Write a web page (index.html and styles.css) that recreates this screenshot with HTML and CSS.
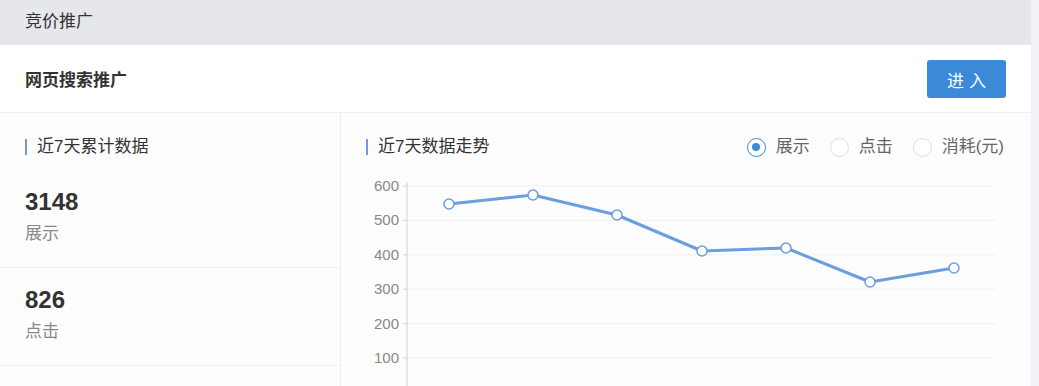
FILE: index.html
```html
<!DOCTYPE html>
<html lang="zh-CN">
<head>
    <meta charset="UTF-8">
    <meta name="viewport" content="width=device-width, initial-scale=1.0">
    <title>竞价推广</title>
    <link rel="stylesheet" href="styles.css">
</head>
<body>
    <div class="page">
        <div class="main">
            <div class="top-bar">竞价推广</div>

            <div class="head-row">
                <span class="head-title">网页搜索推广</span>
                <button class="enter-btn">进入</button>
            </div>

            <div class="content">
                <!-- 左侧：累计数据 -->
                <div class="stats">
                    <div class="section-title">近7天累计数据</div>
                    <div class="stat">
                        <div class="stat-num">3148</div>
                        <div class="stat-label">展示</div>
                    </div>
                    <div class="stat">
                        <div class="stat-num">826</div>
                        <div class="stat-label">点击</div>
                    </div>
                </div>

                <!-- 右侧：趋势图 -->
                <div class="trend">
                    <div class="trend-head">
                        <div class="section-title">近7天数据走势</div>
                        <div class="radios">
                            <label class="radio checked"><span class="dot"></span>展示</label>
                            <label class="radio"><span class="dot"></span>点击</label>
                            <label class="radio"><span class="dot"></span>消耗(元)</label>
                        </div>
                    </div>
                    <svg class="chart" width="689" height="230" viewBox="0 0 689 230">
                        <g class="grid">
                            <line x1="66" y1="16" x2="655" y2="16"/>
                            <line x1="66" y1="50.4" x2="655" y2="50.4"/>
                            <line x1="66" y1="84.8" x2="655" y2="84.8"/>
                            <line x1="66" y1="119.2" x2="655" y2="119.2"/>
                            <line x1="66" y1="153.6" x2="655" y2="153.6"/>
                            <line x1="66" y1="188" x2="655" y2="188"/>
                        </g>
                        <g class="ticks">
                            <line x1="62" y1="16" x2="66" y2="16"/>
                            <line x1="62" y1="50.4" x2="66" y2="50.4"/>
                            <line x1="62" y1="84.8" x2="66" y2="84.8"/>
                            <line x1="62" y1="119.2" x2="66" y2="119.2"/>
                            <line x1="62" y1="153.6" x2="66" y2="153.6"/>
                            <line x1="62" y1="188" x2="66" y2="188"/>
                            <line x1="66" y1="12" x2="66" y2="230"/>
                        </g>
                        <g class="axis-label">
                            <text x="58" y="21">600</text>
                            <text x="58" y="55.4">500</text>
                            <text x="58" y="89.8">400</text>
                            <text x="58" y="124.2">300</text>
                            <text x="58" y="158.6">200</text>
                            <text x="58" y="193">100</text>
                        </g>
                        <polyline class="line" points="108,34 192,25 276,45 361,81 445,78 529,112 613,98"/>
                        <g class="points">
                            <circle cx="108" cy="34" r="5"/>
                            <circle cx="192" cy="25" r="5"/>
                            <circle cx="276" cy="45" r="5"/>
                            <circle cx="361" cy="81" r="5"/>
                            <circle cx="445" cy="78" r="5"/>
                            <circle cx="529" cy="112" r="5"/>
                            <circle cx="613" cy="98" r="5"/>
                        </g>
                    </svg>
                </div>
            </div>
        </div>
        <div class="gutter"></div>
    </div>
</body>
</html>
```

FILE: styles.css
```css
body {
    margin: 0;
    font-family: "Liberation Sans", "Noto Sans CJK SC", sans-serif;
    color: #333;
    background-color: #ffffff;
    overflow: hidden;
}
.page {
    display: flex;
    width: 1039px;
    height: 386px;
}
.main {
    width: 1031px;
    background-color: #ffffff;
}
.gutter {
    flex: 1;
    background-color: #f1f2f5;
}
.top-bar {
    height: 45px;
    line-height: 44px;
    padding-left: 25px;
    background-color: #e6e7eb;
    font-size: 17px;
    color: #333;
}
.head-row {
    height: 67px;
    display: flex;
    align-items: center;
    justify-content: space-between;
    padding: 0 25px;
    border-bottom: 1px solid #eeeff2;
}
.head-title {
    font-size: 17px;
    font-weight: bold;
    color: #333;
}
.enter-btn {
    width: 79px;
    height: 38px;
    margin-top: 1px;
    border: none;
    border-radius: 3px;
    background-color: #3a8ad8;
    color: #ffffff;
    font-family: inherit;
    font-size: 17px;
    letter-spacing: 5px;
    text-indent: 5px;
    cursor: pointer;
}
.content {
    display: flex;
}
.stats {
    width: 340px;
    border-right: 1px solid #eeeff2;
    background-color: #fdfdfe;
}
.section-title {
    position: relative;
    padding-left: 12px;
    font-size: 17px;
    line-height: 22px;
    color: #333;
}
.section-title::before {
    content: "";
    position: absolute;
    left: 0;
    top: 3px;
    width: 2px;
    height: 16px;
    background-color: #6a9edf;
}
.stats .section-title {
    margin: 23px 25px 0;
    height: 34px;
}
.stat {
    padding: 18px 25px 22px;
    border-bottom: 1px solid #eeeff2;
}
.stat-num {
    font-size: 24px;
    font-weight: bold;
    line-height: 28px;
    color: #333;
}
.stat-label {
    margin-top: 7px;
    font-size: 17px;
    line-height: 22px;
    color: #888;
}
.trend {
    flex: 1;
    background-color: #fdfdfe;
}
.trend-head {
    display: flex;
    justify-content: space-between;
    align-items: flex-start;
    padding: 23px 27px 0 25px;
    height: 34px;
}
.radios {
    display: flex;
    gap: 20px;
}
.radio {
    display: flex;
    align-items: center;
    gap: 10px;
    font-size: 17px;
    line-height: 22px;
    color: #666;
}
.radio .dot {
    box-sizing: border-box;
    width: 19px;
    height: 19px;
    border: 1px solid #dcdfe5;
    border-radius: 50%;
    background-color: #ffffff;
    position: relative;
}
.radio.checked .dot {
    border-color: #3a8ad8;
}
.radio.checked .dot::after {
    content: "";
    position: absolute;
    left: 4.5px;
    top: 4.5px;
    width: 8px;
    height: 8px;
    border-radius: 50%;
    background-color: #3a8ad8;
}
.chart {
    display: block;
}
.grid line {
    stroke: #f0f1f3;
    stroke-width: 1;
}
.ticks line {
    stroke: #cfd2d8;
    stroke-width: 1;
}
.axis-label text {
    font-family: "Liberation Sans", sans-serif;
    font-size: 15px;
    fill: #888;
    text-anchor: end;
}
.line {
    fill: none;
    stroke: #6a9edf;
    stroke-width: 3;
    stroke-linejoin: round;
}
.points circle {
    fill: #ffffff;
    stroke: #6a9edf;
    stroke-width: 1.5;
}
```
